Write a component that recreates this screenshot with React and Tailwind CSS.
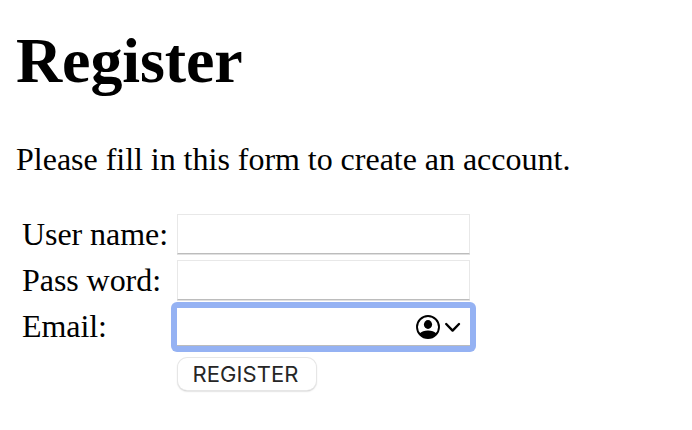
const fieldClass =
  "block w-[293px] h-10 rounded-none border border-[#e8e8e8] border-b-[#bcbcbc] bg-white outline-none shadow-[0_1px_0_#e0e0e0]";

function Row({ label, children }) {
  return (
    <div className="flex h-[46px] items-center">
      <label className="w-[155px] shrink-0 whitespace-pre tracking-[-0.06px]">{label}</label>
      {children}
    </div>
  );
}

export default function App() {
  return (
    <main
      className="h-[430px] w-[692px] overflow-hidden bg-white pl-4 pt-6 text-[32px] leading-[37px] text-black"
      style={{ fontFamily: '"Liberation Serif", "Times New Roman", serif' }}
    >
      <h1 className="text-[64px] font-bold leading-[74px] tracking-[-0.1px]">Register</h1>
      <p className="mt-[43px] [word-spacing:-0.12px]">Please fill in this form to create an account.</p>
      <form className="mt-[33px] pl-1.5">
        <Row label="User name:">
          <input className={fieldClass} />
        </Row>
        <Row label="Pass word:">
          <input className={fieldClass} />
        </Row>
        <Row label="Email:">
          <div className="-ml-1.5 mt-0.5 rounded-md bg-[#95b2f3] p-1.5">
            <div className="flex h-[38px] w-[293px] items-center justify-end border-b border-[#bcbcbc] bg-white pr-[9px]">
              <svg width="46" height="26" viewBox="0 0 46 26" fill="none">
                <circle cx="13" cy="13" r="11" stroke="#000" strokeWidth="1.9" />
                <ellipse cx="13" cy="10.5" rx="4.1" ry="4.4" fill="#000" />
                <path d="M4.500 19.500c2-2.200 5-3.100 8.500-3.100s6.500.9 8.500 3.100c-2 2.500-5 4-8.500 4s-6.500-1.500-8.500-4Z" fill="#000" />
                <path d="m31.200 10 6.400 6.600 6.400-6.600" stroke="#000" strokeWidth="2.4" strokeLinecap="round" strokeLinejoin="round" />
              </svg>
            </div>
          </div>
        </Row>
        <div className="flex pl-[156px] pt-[9px]">
          <button
            type="button"
            className="h-8 w-[138px] rounded-[9px] bg-white pr-[3px] text-[22px] leading-[33px] tracking-[0.05px] text-[#262626] shadow-[0_0_0_1px_#e6e6e6,0_1px_2px_#a8a8a8]"
            style={{ fontFamily: 'Inter, "Liberation Sans", sans-serif' }}
          >
            REGISTER
          </button>
        </div>
      </form>
    </main>
  );
}
